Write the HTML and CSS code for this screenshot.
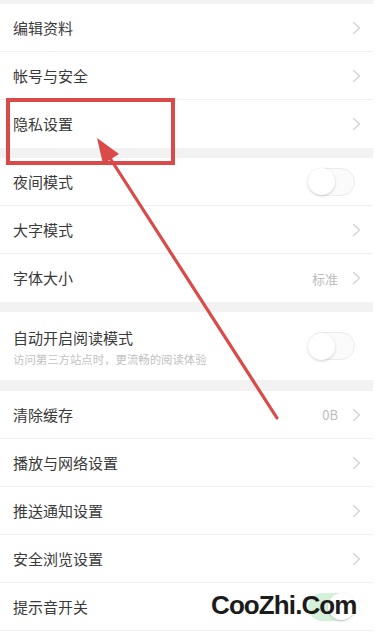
FILE: index.html
```
<!DOCTYPE html>
<html lang="zh-CN">
<head>
<meta charset="utf-8">
<link rel="stylesheet" href="styles.css">
</head>
<body>
<div class="page">
  <div class="app">
    <div class="band band-top"></div>
    <div class="section">
      <div class="row"><span class="label">编辑资料</span><span class="chev"><svg width="9" height="14" viewBox="0 0 9 14"><polyline points="1.5,1.5 7.5,7 1.5,12.5"/></svg></span></div>
      <div class="row"><span class="label">帐号与安全</span><span class="chev"><svg width="9" height="14" viewBox="0 0 9 14"><polyline points="1.5,1.5 7.5,7 1.5,12.5"/></svg></span></div>
      <div class="row"><span class="label">隐私设置</span><span class="chev"><svg width="9" height="14" viewBox="0 0 9 14"><polyline points="1.5,1.5 7.5,7 1.5,12.5"/></svg></span></div>
    </div>
    <div class="band band-a"></div>
    <div class="section">
      <div class="row"><span class="label">夜间模式</span><span class="toggle"><span class="knob"></span></span></div>
      <div class="row"><span class="label">大字模式</span><span class="chev"><svg width="9" height="14" viewBox="0 0 9 14"><polyline points="1.5,1.5 7.5,7 1.5,12.5"/></svg></span></div>
      <div class="row"><span class="label">字体大小</span><span class="value">标准</span><span class="chev"><svg width="9" height="14" viewBox="0 0 9 14"><polyline points="1.5,1.5 7.5,7 1.5,12.5"/></svg></span></div>
    </div>
    <div class="band band-a"></div>
    <div class="section">
      <div class="row row-tall">
        <div class="texts">
          <span class="label">自动开启阅读模式</span>
          <span class="sub">访问第三方站点时，更流畅的阅读体验</span>
        </div>
        <span class="toggle"><span class="knob"></span></span>
      </div>
    </div>
    <div class="band band-b"></div>
    <div class="section last">
      <div class="row"><span class="label">清除缓存</span><span class="value">0B</span><span class="chev"><svg width="9" height="14" viewBox="0 0 9 14"><polyline points="1.5,1.5 7.5,7 1.5,12.5"/></svg></span></div>
      <div class="row"><span class="label">播放与网络设置</span><span class="chev"><svg width="9" height="14" viewBox="0 0 9 14"><polyline points="1.5,1.5 7.5,7 1.5,12.5"/></svg></span></div>
      <div class="row"><span class="label">推送通知设置</span><span class="chev"><svg width="9" height="14" viewBox="0 0 9 14"><polyline points="1.5,1.5 7.5,7 1.5,12.5"/></svg></span></div>
      <div class="row"><span class="label">安全浏览设置</span><span class="chev"><svg width="9" height="14" viewBox="0 0 9 14"><polyline points="1.5,1.5 7.5,7 1.5,12.5"/></svg></span></div>
      <div class="row"><span class="label">提示音开关</span><span class="toggle on"><span class="knob"></span></span></div>
    </div>
  </div>

  <svg class="annot" width="391" height="634" viewBox="0 0 391 634">
    <rect x="8" y="100" width="165" height="63" fill="none" stroke="#d94a48" stroke-width="4"/>
    <line x1="277" y1="418" x2="108" y2="155" stroke="#d94a48" stroke-width="3.2" stroke-linecap="round"/>
    <polygon points="97,138 119,154 103,164" fill="#d94a48"/>
  </svg>
  <div class="watermark">CooZhi.Com</div>
</div>
</body>
</html>
```
FILE: styles.css
```
html, body {
  margin: 0;
  padding: 0;
  background: #ffffff;
}
body {
  font-family: "Noto Sans CJK SC", "Noto Sans", sans-serif;
  color: #383838;
}
.page {
  position: relative;
  width: 391px;
  height: 634px;
  overflow: hidden;
}
.app {
  width: 373px;
  display: flex;
  flex-direction: column;
}
.band {
  background: #f2f2f2;
}
.band-top { height: 4px; }
.band-a { height: 10px; }
.band-b { height: 11px; }
.section {
  display: flex;
  flex-direction: column;
  background: #fff;
}
.row {
  box-sizing: border-box;
  height: 48px;
  display: flex;
  align-items: center;
  padding: 0 12px 0 13px;
  border-bottom: 1px solid #f0f0f0;
}
.section .row:last-child {
  border-bottom: none;
}
.section.last .row:last-child {
  border-bottom: 1px solid #f0f0f0;
}
.label {
  font-size: 15px;
  line-height: 20px;
  flex: 1;
  color: #3a3a3a;
}
.row-tall {
  height: 68px;
  align-items: center;
}
.texts {
  flex: 1;
  display: flex;
  flex-direction: column;
  gap: 4px;
  padding-top: 3px;
}
.sub {
  font-size: 11.4px;
  line-height: 15px;
  color: #c2c2c2;
}
.value {
  font-size: 13px;
  color: #bdbdbd;
  margin-right: 14px;
}
.chev {
  display: flex;
  align-items: center;
}
.chev polyline {
  fill: none;
  stroke: #d2d2d2;
  stroke-width: 1.3;
  stroke-linecap: round;
  stroke-linejoin: round;
}
.toggle {
  box-sizing: border-box;
  width: 47px;
  height: 28px;
  border-radius: 14px;
  border: 1px solid #ececec;
  background: #fbfbfb;
  margin-right: 6px;
  position: relative;
  display: flex;
  align-items: center;
}
.knob {
  width: 27px;
  height: 27px;
  border-radius: 50%;
  background: #fff;
  box-shadow: 0 1px 3px rgba(0, 0, 0, 0.18);
  margin-left: -1px;
}
.toggle.on {
  background: #d6f1da;
  border-color: #d6f1da;
  justify-content: flex-end;
}
.toggle.on .knob {
  margin-left: 0;
  margin-right: -1px;
}
.annot {
  position: absolute;
  left: 0;
  top: 0;
  pointer-events: none;
}
.watermark {
  position: absolute;
  left: 211px;
  top: 588px;
  font-family: "Liberation Sans", Arial, sans-serif;
  font-weight: bold;
  font-size: 26px;
  letter-spacing: -0.9px;
  line-height: 34px;
  color: #1c1c1c;
}
```
